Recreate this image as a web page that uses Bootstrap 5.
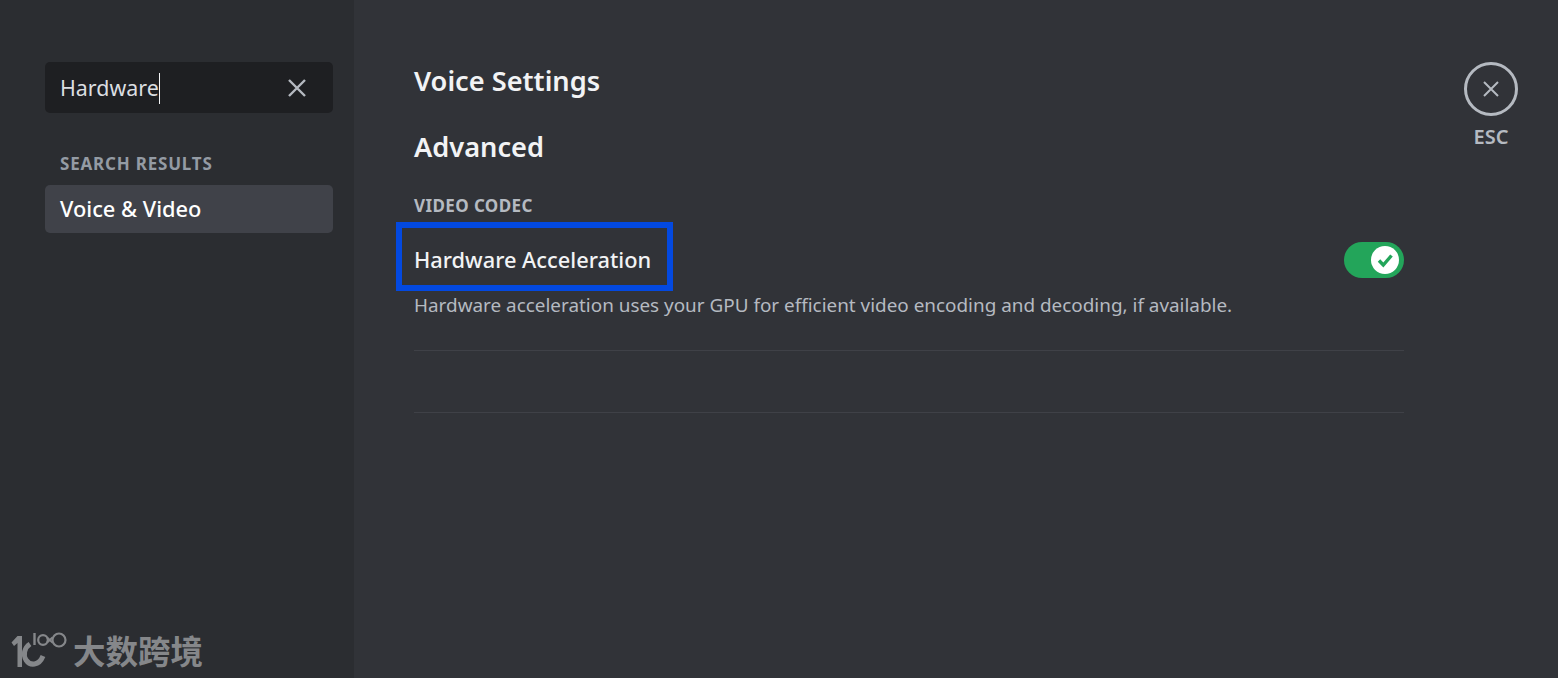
<!DOCTYPE html>
<html lang="en">
<head>
    <meta charset="UTF-8">
    <meta name="viewport" content="width=device-width, initial-scale=1.0">
    <title>Voice Settings</title>
    <link href="https://cdn.jsdelivr.net/npm/bootstrap@5.3.0/dist/css/bootstrap.min.css" rel="stylesheet">
    <style>
        body {
            background-color: #313338;
            font-family: "Noto Sans", "Noto Sans CJK SC", sans-serif;
            height: 678px;
            overflow: hidden;
        }
        .settings-side {
            width: 354px;
            height: 678px;
            background-color: #2b2d31;
            padding: 62px 21px 0 45px;
        }
        .search-box {
            height: 51px;
            background-color: #1e1f22;
            border-radius: 5px;
            padding: 1px 26px 0 15px;
            color: #dbdee1;
            font-size: 21.4px;
        }
        .search-caret {
            width: 1px;
            height: 31px;
            background-color: #f2f3f5;
        }
        .side-title {
            margin: 41px 0 0 15px;
            height: 31px;
            color: #949ba4;
            font-size: 17px;
            font-weight: 700;
            line-height: 20px;
            letter-spacing: .8px;
        }
        .side-item {
            height: 48px;
            background-color: #404249;
            border-radius: 5px;
            padding: 1px 0 0 15px;
            color: #fff;
            font-size: 21.8px;
            font-weight: 500;
        }
        .settings-main {
            width: 990px;
            margin-left: 60px;
            padding-top: 63px;
        }
        .page-title {
            height: 36px;
            margin: 0;
            color: #f2f3f5;
            font-size: 27.2px;
            font-weight: 600;
            line-height: 36px;
        }
        .advanced-title {
            height: 36px;
            margin: 30px 0 0;
            color: #f2f3f5;
            font-size: 27.2px;
            font-weight: 600;
            line-height: 36px;
        }
        .codec-title {
            margin: 31px 0 0;
            height: 20px;
            color: #b5bac1;
            font-size: 17px;
            font-weight: 700;
            line-height: 20px;
            letter-spacing: .4px;
        }
        .option-row {
            height: 36px;
            margin-top: 26px;
        }
        .option-name {
            color: #f2f3f5;
            font-size: 21.8px;
            font-weight: 500;
            line-height: 32px;
        }
        .blue-box {
            top: -22px;
            left: -18px;
            width: 277px;
            height: 69px;
            border: 6px solid #0349e0;
        }
        .option-toggle {
            width: 60px;
            height: 36px;
            border-radius: 18px;
            background-color: #23a55a;
        }
        .toggle-knob {
            top: 4px;
            right: 5px;
            width: 28px;
            height: 28px;
            border-radius: 50%;
            background-color: #fff;
        }
        .option-note {
            margin: 14px 0 0;
            color: #b5bac1;
            font-size: 18.9px;
            line-height: 26px;
        }
        .row-line {
            height: 1px;
            background-color: #3f4147;
        }
        .line-one { margin-top: 32px; }
        .line-two { margin-top: 61px; }
        .esc-col {
            margin-left: 60px;
            padding-top: 62px;
            width: 54px;
        }
        .esc-ring {
            width: 54px;
            height: 54px;
            border: 3px solid #b5bac1;
            border-radius: 50%;
        }
        .esc-text {
            margin-top: 10px;
            color: #b5bac1;
            font-size: 20px;
            font-weight: 600;
            line-height: 22px;
        }
        .mark-wrap {
            left: 10px;
            top: 630px;
            color: #85878a;
        }
        .mark-text {
            margin: -4px 0 0 3px;
            font-family: "Noto Sans CJK SC", sans-serif;
            font-size: 32.5px;
            font-weight: 700;
            line-height: 44px;
        }
    </style>
</head>
<body>
<div class="d-flex position-relative">
    <div class="settings-side flex-shrink-0">
        <div class="search-box d-flex align-items-center">
            <span>Hardware</span>
            <span class="search-caret"></span>
            <svg class="ms-auto" width="20" height="20" viewBox="0 0 20 20">
                <path d="M2 2 18 18M18 2 2 18" stroke="#b5bac1" stroke-width="2.4" fill="none"/>
            </svg>
        </div>
        <div class="side-title">SEARCH RESULTS</div>
        <div class="side-item d-flex align-items-center">Voice &amp; Video</div>
    </div>

    <div class="settings-main flex-shrink-0">
        <h2 class="page-title">Voice Settings</h2>
        <h2 class="advanced-title">Advanced</h2>
        <div class="codec-title">VIDEO CODEC</div>
        <div class="option-row d-flex align-items-center justify-content-between">
            <div class="option-name position-relative">
                Hardware Acceleration
                <div class="blue-box position-absolute"></div>
            </div>
            <div class="option-toggle position-relative">
                <div class="toggle-knob position-absolute d-flex align-items-center justify-content-center">
                    <svg width="18" height="18" viewBox="0 0 18 18">
                        <path d="M3 9.5 7.3 14 15.5 4.5" stroke="#23a55a" stroke-width="3.4" fill="none"/>
                    </svg>
                </div>
            </div>
        </div>
        <p class="option-note">Hardware acceleration uses your GPU for efficient video encoding and decoding, if available.</p>
        <div class="row-line line-one"></div>
        <div class="row-line line-two"></div>
    </div>

    <div class="esc-col d-flex flex-column align-items-center flex-shrink-0">
        <div class="esc-ring d-flex align-items-center justify-content-center flex-shrink-0">
            <svg width="18" height="18" viewBox="0 0 18 18">
                <path d="M2 2 16 16M16 2 2 16" stroke="#b5bac1" stroke-width="2" fill="none"/>
            </svg>
        </div>
        <div class="esc-text">ESC</div>
    </div>

    <div class="mark-wrap position-absolute d-flex align-items-center">
        <svg width="60" height="44" viewBox="0 0 60 44">
            <path d="M1.5 12.5 7.5 6H12V37H7.5V13L4 16Z" fill="#85878a"/>
            <path d="M20 14C14 18 13 25 16 30 20 36 29 36 33 26" stroke="#85878a" stroke-width="5" fill="none"/>
            <path d="M24.5 3V15" stroke="#85878a" stroke-width="2.4" fill="none"/>
            <circle cx="33" cy="10" r="4.8" stroke="#85878a" stroke-width="2.2" fill="none"/>
            <circle cx="49" cy="10" r="6.5" stroke="#85878a" stroke-width="2.2" fill="none"/>
            <path d="M37 7.5 42.5 12.5M37 12.5 42.5 7.5" stroke="#85878a" stroke-width="2" fill="none"/>
        </svg>
        <span class="mark-text">大数跨境</span>
    </div>
</div>
<script src="https://cdn.jsdelivr.net/npm/bootstrap@5.3.0/dist/js/bootstrap.bundle.min.js"></script>
</body>
</html>
